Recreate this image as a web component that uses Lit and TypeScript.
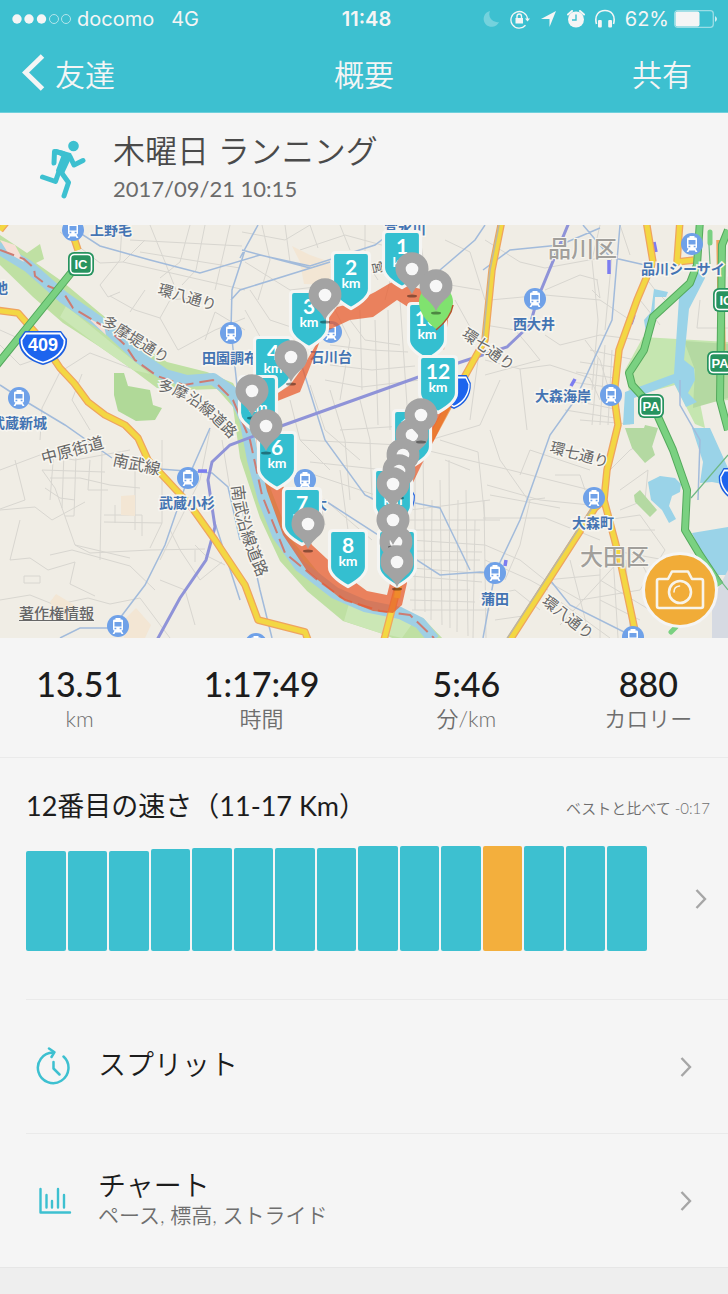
import { LitElement, html, svg, css } from "lit";
import { customElement } from "lit/decorators.js";
import { classMap } from "lit/directives/class-map.js";

const SHIELDS = [
  { n: "13", x: 407, y: 302 },
  { n: "1", x: 382, y: 230 },
  { n: "2", x: 331, y: 251 },
  { n: "3", x: 289, y: 290 },
  { n: "4", x: 253, y: 336 },
  { n: "5", x: 238, y: 375 },
  { n: "6", x: 257, y: 431 },
  { n: "7", x: 282, y: 487 },
  { n: "8", x: 328, y: 529 },
  { n: "9", x: 377, y: 529 },
  { n: "10", x: 373, y: 468 },
  { n: "11", x: 392, y: 409 },
  { n: "12", x: 418, y: 355 },
];

const PINS = [
  [412, 269], [325, 295], [291, 357], [252, 391], [266, 426],
  [412, 435], [403, 455], [399, 471], [393, 484], [421, 415],
  [308, 524], [396, 542], [393, 520], [397, 562],
];

const STATIONS = [
  [73, 230], [231, 333], [19, 398], [188, 478], [118, 626], [331, 332],
  [305, 480], [535, 299], [692, 244], [611, 395], [594, 498], [495, 573],
  [633, 637], [256, 644],
];

const PLACES = [
  { t: "上野毛", x: 90, y: 235, s: 14 },
  { t: "池", x: -6, y: 293, s: 14 },
  { t: "田園調布", x: 202, y: 363, s: 14 },
  { t: "武蔵新城", x: -9, y: 428, s: 14 },
  { t: "武蔵小杉", x: 159, y: 508, s: 14 },
  { t: "石川台", x: 310, y: 362, s: 14 },
  { t: "大", x: 313, y: 509, s: 14 },
  { t: "富水川", x: 384, y: 234, s: 14 },
  { t: "西大井", x: 513, y: 329, s: 14 },
  { t: "品川シーサイド", x: 641, y: 274, s: 14 },
  { t: "大森海岸", x: 535, y: 401, s: 14 },
  { t: "大森町", x: 572, y: 528, s: 14 },
  { t: "蒲田", x: 481, y: 604, s: 14 },
];

const ROADS = [
  { t: "環八通り", x: 157, y: 294, s: 15, r: 16 },
  { t: "多摩堤通り", x: 101, y: 324, s: 15, r: 32 },
  { t: "中原街道", x: 43, y: 464, s: 16, r: -15 },
  { t: "南武線", x: 112, y: 465, s: 16, r: 12 },
  { t: "環七通り", x: 461, y: 336, s: 15, r: 36 },
  { t: "環七通り", x: 549, y: 452, s: 15, r: 15 },
  { t: "環八通り", x: 541, y: 603, s: 15, r: 38 },
];

const STATS = [
  { value: "13.51", unit: "km" },
  { value: "1:17:49", unit: "時間" },
  { value: "5:46", unit: "分/km" },
  { value: "880", unit: "カロリー" },
];

const PACE = [95, 95, 95, 97, 98, 98, 98, 98, 100, 100, 100, 100, 100, 100, 100];
const BEST = 11;

const chevron = html`<svg class="chevron" viewBox="0 0 12 22" aria-hidden="true">
  <path d="M1.5 2 10 11 1.5 20" fill="none" stroke="#a6a6a6" stroke-width="2.4" />
</svg>`;

@customElement("route-map")
class RouteMap extends LitElement {
  static styles = css`
    :host { display: block; position: relative; }
    .canvas { display: block; width: 100%; aspect-ratio: 728 / 413; background: #f0ede5; }
    text { font-family: "Noto Sans CJK JP", sans-serif; }
    .place { fill: #4474b3; font-weight: 700; paint-order: stroke; stroke: #f7f5ef; stroke-width: 3px; }
    .road { fill: #666; font-weight: 400; paint-order: stroke; stroke: #f7f5ef; stroke-width: 3px; }
    .ward { fill: #a19f9b; font-weight: 500; font-size: 23px; paint-order: stroke; stroke: #f7f5ef; stroke-width: 2px; }
    .km { fill: #fff; font-family: Lato, sans-serif; font-weight: 700; text-anchor: middle; }
    .sign { fill: #fff; font-family: "Liberation Sans", sans-serif; font-weight: 700; text-anchor: middle; }
    .narrow { font-size: 13px; }
    .wide { font-size: 18px; }
    .legal {
      position: absolute; left: 19px; bottom: 15px; color: #666; text-decoration: underline;
      font: 500 15px/20px "Noto Sans CJK JP", sans-serif;
      text-shadow: 0 0 2px #fff;
    }
    .camera {
      position: absolute; right: 10px; bottom: 10px; width: 76px; height: 76px; padding: 0;
      display: grid; place-items: center; border: 3px solid #f5f5f5; border-radius: 50%;
      background: #f1ac38;
    }
    .camera svg { width: 50px; height: 42px; }
  `;

  private streets() {
    return svg`<g fill="none" stroke="#d8d6d0" stroke-width="1">
      <path d="M60 232 100 263 123 262 145 240M123 262 180 275 245 290M122 225 120 260 100 285 108 297 120 292M150 225 165 262 178 295M190 225 180 262 160 278M205 225 196 270 182 285M230 225 215 290M130 240 242 246M140 252 240 268M110 296 135 310 160 318 178 350M130 312 145 290M160 318 170 300 190 298M178 350 215 330 245 318M205 340 215 312 245 330"/>
      <path d="M0 330 40 348 60 372 90 353 130 368M60 372 42 408 40 440M82 374 72 400 90 430M0 345 20 365 40 358M0 470 40 455 75 460 130 450M42 470 55 488 75 545 130 558M75 545 90 553 150 550 205 549M15 460 25 500 0 509M42 470 105 472M50 478 80 478 110 485 140 488M45 488 60 498 75 500M54 450 50 500M64 452 62 508M76 455 74 516 65 516M90 460 88 490 108 490M102 450 100 560M135 455 135 530M104 515 142 515 142 536M104 522 162 523M115 505 115 523M162 440 162 523 150 548M0 510 35 507 52 520 85 502M20 520 10 560 30 558 48 570 75 562 70 584 95 596M50 555 72 550 130 566 155 590M0 600 30 595 55 605 88 598M24 576 40 576 40 583 24 583ZM170 530 180 550 200 580 222 562M160 580 185 590 195 625M210 430 200 480 160 560M195 550 195 562M222 440 235 520 245 540M88 598 110 604 140 598 170 638M225 565 205 555 195 545"/>
      <path d="M242 232 285 240 310 225M245 262 290 290 332 285M250 290 270 320 300 330M262 225 270 260 258 300M285 225 290 262M300 250 345 235 400 250M310 225 318 248M340 225 350 250M365 225 365 260 378 280M385 225 395 262 385 300M418 225 425 270M245 310 262 340M330 300 350 340 340 400M350 320 365 340 400 345M360 310 362 390M375 320 378 425M388 310 390 430M400 300 408 420M330 345 372 350 408 352M330 365 372 370 415 366M325 380 362 387 420 380M290 400 300 440 330 470M310 385 325 430 360 460M330 390 345 440 350 500M360 400 370 440 372 500M445 240 470 252 485 300M450 285 480 290M455 300 480 345 470 420M440 440 478 452 485 520M445 460 470 470M325 300 322 330M340 430 420 425M300 440 400 445M310 462 385 470M290 490 325 500 372 540M300 470 390 500M320 500 325 525M340 470 348 530"/>
      <path d="M415 455 415 610M423 450 425 612M432 500 431 620M440 480 442 625M449 460 450 628M458 500 457 632M466 490 468 636M475 520 473 638M484 500 486 638M410 510 490 500M410 520 500 520M412 530 480 530M410 540 485 545M412 551 482 552M410 560 480 560M412 568 500 575M410 576 482 582M410 590 470 590M410 600 475 602M412 610 490 610M425 450 510 470 590 490M430 440 480 425 500 380"/>
      <path d="M485 240 520 262 545 268 600 258M490 300 545 295 600 300 630 320M485 325 515 330 528 345 540 360 485 375M485 360 520 369 550 365 590 378 600 400M520 369 527 430M545 335 560 345 600 335 640 340M545 290 580 275 598 280M597 280 600 298 592 290M600 225 592 260 598 320 592 390M612 255 605 330M585 340 600 360 612 400M570 400 620 410M565 410 615 418M580 420 630 424M590 350 635 360M598 358 592 425M605 345 600 425M612 350 608 425M620 345 616 400M580 362 620 368M576 372 614 378M572 382 614 388M640 270 655 290 665 300M640 300 660 325M700 300 697 328 728 328M620 225 630 255M487 485 540 500 590 505M490 430 500 460 528 500 545 498M490 495 560 508M483 518 545 518 600 540M485 545 520 560 545 580 600 575M530 500 520 545 505 580M555 475 580 475 585 490M520 475 530 450 590 470M545 580 580 600 640 590M555 598 610 638M560 625 620 560M600 580 650 610M606 520 640 515 665 550 640 590M620 490 648 470 645 500 620 510M610 470 630 450 650 440M630 530 655 530M610 550 665 560M600 600 640 620"/>
      <path d="M600 568V638M612 540 618 638M626 560 630 630M570 560 590 638M640 560 660 600M485 560 530 580 548 590M490 595 515 590 540 610M495 620 530 615"/>
    </g>`;
  }

  private land() {
    return svg`
      <g fill="#f3e6d4">
        <path d="M292 246 310 255 330 262 334 285 304 284 300 262Z"/>
        <path d="M121 496 135 495 135 516 121 515ZM50 602 56 594 76 606 70 622 60 620ZM126 618 136 608 151 625 145 638 124 638Z"/>
      </g>
      <path fill="#bfe0a3" d="M0 235 27 253 40 244 44 259 36 263 63 282 100 313 133 340 167 362 207 372 233 383 245 407 250 428 262 465 273 495 290 538 323 578 357 605 393 611 423 618 444 640 397 640 380 633 343 621 307 591 280 561 260 518 240 458 233 407 217 389 187 390 157 388 133 370 100 347 63 323 33 297 0 265Z"/>
      <path fill="#cbe7b5" d="M66 306 150 374 133 370 100 347 60 317ZM350 600 395 614 412 624 402 638 380 633 344 621Z"/>
      <path fill="#b0d998" d="M114 373 124 373 128 386 150 390 153 405 162 408 155 420 136 421 118 411 114 395Z"/>
      <path fill="none" stroke="#9fcfe4" stroke-width="12" stroke-linejoin="round" d="M-5 246 28 266 63 297 110 330 140 358 165 375 187 381 213 379 233 393 245 418 253 460 264 500 278 535 300 566 335 593 365 606 400 613 420 623 434 640"/>
      <path fill="#f7dfd6" d="M0 240 15 245 24 262 8 253ZM88 318 104 326 106 335Z"/>
      <path fill="none" stroke="#cd7c73" stroke-width="2" stroke-dasharray="15 6" d="M0 250 24 259 34 268 35 276 48 286 63 292 73 308 108 329 125 345 135 360 157 376 184 385 213 380 233 400 250 440 262 495 285 553 315 578 345 600 380 611 410 615 434 638"/>
      <path fill="#c5e6b0" d="M643 337 728 342 728 400 700 403 705 428 695 424 675 385 630 397 625 370Z"/>
      <path fill="#b4d9a2" d="M684 341 728 344V398L693 408 695 370ZM625 428 646 428 655 455 645 463 632 448ZM645 425 658 428 652 447 640 440ZM634 495 640 490 657 510 650 517 635 502Z"/>
      <path fill="#9ad3e8" d="M700 270 705 278 689 309 684 360 694 368 695 380 688 393 697 402 686 407 674 383 634 398 634 424 623 425 625 392 674 374 679 298 697 274ZM654 289 668 292 666 297 655 297 654 322 646 333 644 320 651 312ZM692 428 710 428 728 468V485L712 482 700 483 703 462ZM648 482 660 476 675 478 681 484 680 492 672 496 669 506 676 519 669 523 662 510 651 500ZM692 533 728 527V575L718 575 700 550Z"/>
      <path fill="#d6dae2" d="M712 600 728 570V638H712Z"/>`;
  }

  private lines() {
    return svg`
      <g fill="none" stroke="#a2bbdb" stroke-width="1.500">
        <path d="M60 220 100 246 150 260 200 273 260 255 310 266 375 245 392 232M240 258 258 225M242 250 310 268M245 250 232 290 231 330 238 395M231 300 240 290 330 262M0 385 20 398 65 425 112 458M210 428 188 478 165 545 145 585 120 618M60 638 80 628 118 628M160 469 212 473 228 487 240 540M300 360 325 440 365 495 375 500M324 500 440 575 480 572 495 573M415 503 440 508 470 570M620 225 612 320 575 400 550 435 520 520 495 573 483 638M483 270 510 250 560 245 600 228M583 225 610 257 645 265M440 270 475 240 485 225M550 580 570 605 630 635M680 380 680 405 700 440 698 500M240 500 260 590 272 638M214 520 240 600"/>
      </g>
      <path fill="none" stroke="#8f93d8" stroke-width="3" d="M570 220 537 300 530 325 507 347 455 364 270 430 230 445 212 462 208 480 215 527 206 560 180 598 157 640"/>
      <g fill="none" stroke="#7c7df0" stroke-width="3.500"><path d="M198 471H207M609 260V274M634 315 631 324M575 379 571 386M611 450 609 456M506 560 505 566M654 242 656 252"/></g>
      <g fill="none" stroke-linejoin="round">
        <g stroke="#efa45f" stroke-width="7.500">
          <path d="M0 230 8 220M70 226 78 250M-5 310 18 313 40 338 60 368 74 383 88 402 105 415 125 425 138 438 148 460 165 478 190 505 215 540 245 585 258 620 305 632 308 640"/>
          <path d="M502 220 492 270 485 340 456 392 430 440M646 220 653 262 637 300 619 350 614 395 618 425 607 470 604 500 620 560 637 640M680 220 677 262 694 260M722 350 720 240M405 560 384 640M604 500 595 508 510 640"/>
        </g>
        <g stroke="#f3d743" stroke-width="5">
          <path d="M0 230 8 220M70 226 78 250M-5 310 18 313 40 338 60 368 74 383 88 402 105 415 125 425 138 438 148 460 165 478 190 505 215 540 245 585 258 620 305 632 308 640"/>
          <path d="M502 220 492 270 485 340 456 392 430 440M646 220 653 262 637 300 619 350 614 395 618 425 607 470 604 500 620 560 637 640M680 220 677 262 694 260M405 560 384 640M604 500 595 508 510 640"/>
        </g>
        <path stroke="#bcb7a2" stroke-width="1.600" d="M500 220 490 270 483 340M602 500 592 508 506 640"/>
      </g>
      <g fill="none" stroke-linejoin="round">
        <path stroke="#54a95c" stroke-width="8" d="M-4 366 75 268M700 220 697 265 690 283 653 317 644 350 629 373 632 385 655 410 673 450 687 490 685 530 700 555 720 585M728 230 722 245 720 400 728 430"/>
        <path stroke="#7ad181" stroke-width="6" d="M-4 366 75 268M700 220 697 265 690 283 653 317 644 350 629 373 632 385 655 410 673 450 687 490 685 530 700 555 720 585M728 230 722 245 720 400 728 430"/>
        <path stroke="#7ad181" stroke-width="5" stroke-linecap="round" d="M710 232V243M676 627 671 632"/>
        <path stroke="#6fb985" stroke-width="1.200" d="M691 498 728 455M709 245 710 264M716 575 728 590"/>
      </g>`;
  }

  private route() {
    return svg`<g fill="#e8592a" fill-opacity=".73">
      <path d="M392 282 375 292 353 303 337 307 325 323 317 343 303 367 290 385 278 393 262 396 256 420 257 450 267 491 283 535 307 571 340 598 373 611 393 613 402 605 407 583 405 540 407 495 420 468 440 428 453 403 452 380 442 360 432 390 412 440 390 490 385 530 390 583 387 595 367 591 340 571 312 545 283 486 276 455 275 402 300 392 310 367 323 333 335 327 350 320 373 317 397 300 408 307 425 312 444 350 448 320 425 290Z"/>
    </g>
    <path d="M402 566 397 598" stroke="#ef8a2b" stroke-width="6" fill="none"/>`;
  }

  private station([x, y]: number[]) {
    return svg`<g transform="translate(${x} ${y})">
      <circle r="11" fill="#6fa1e8"/>
      <path fill="#fff" d="M-2.500-8H2.500V-6.500H4Q5-6.500 5-5V3Q5 4.500 3.500 4.500L5.500 8H3.500L2.800 6.500H-2.800L-3.500 8H-5.500L-3.500 4.500Q-5 4.500-5 3V-5Q-5-6.500-4-6.500H-2.500Z"/>
      <path fill="#6fa1e8" d="M-3.500-4H3.500V.5H-3.500ZM-3.500 1.800H-1.700V3.300H-3.500ZM1.700 1.800H3.500V3.300H1.700Z"/>
    </g>`;
  }

  private shield(s: { n: string; x: number; y: number }) {
    return svg`<g transform="translate(${s.x} ${s.y})">
      <path d="M5 1.500H35Q38.500 1.500 38.500 5V38C38.500 45 30 52 20 57.500C10 52 1.500 45 1.500 38V5Q1.500 1.500 5 1.500Z" fill="#34bfd0" stroke="#f5f5f3" stroke-width="3.200"/>
      <text class="km" x="20" y="24" font-size="21">${s.n}</text>
      <text class="km" x="20" y="37" font-size="14">km</text>
    </g>`;
  }

  private pin([x, y]: number[]) {
    return svg`<g transform="translate(${x} ${y})">
      <ellipse cy="27" rx="5" ry="1.500" fill="#000" fill-opacity=".4"/>
      <path d="M0 25Q-2 20-9 13.500A16.500 16.500 0 1 1 9 13.500Q2 20 0 25Z" fill="#a3a3a3"/>
      <circle r="6.300" fill="#f7f7f7"/>
    </g>`;
  }

  private sign(t: string, x: number, y: number) {
    return svg`<g transform="translate(${x} ${y})">
      <rect x="-13" y="-12" width="26" height="24" rx="6" fill="#27935f"/>
      <rect x="-10.500" y="-9.500" width="21" height="19" rx="4" fill="#27935f" stroke="#fff" stroke-width="1.600"/>
      <text class="sign narrow" y="5">${t}</text>
    </g>`;
  }

  private badge(x: number, y: number, scale = 1) {
    return svg`<g transform="translate(${x} ${y}) scale(${scale} 1)">
      <path d="M-18-16H18L24-8C25 6 14 14 0 18C-14 14-25 6-24-8Z" fill="#1c5fe0"/>
      <path d="M-17-13.500H17L21.500-7C22 4 12 12 0 15.500C-12 12-22 4-21.500-7Z" fill="#1d64ee" stroke="#fff" stroke-width="1.800"/>
    </g>`;
  }

  render() {
    return html`
      <svg class="canvas" viewBox="0 225 728 413" preserveAspectRatio="xMidYMid slice" role="img" aria-label="ランニングコース">
        ${this.streets()} ${this.land()} ${this.lines()}
        ${this.badge(454, 391, 0.7)} ${this.badge(398, 503, 0.7)} ${this.badge(738, 484, 0.8)}
        ${this.badge(43, 347)}
        <text class="sign wide" x="43" y="351">409</text>
        ${this.sign("IC", 726, 300)} ${this.sign("IC", 81, 264)}
        ${this.sign("PA", 720, 363)} ${this.sign("PA", 651, 406)}
        ${STATIONS.map((s) => this.station(s))}
        ${PLACES.map((p) => svg`<text class="place" x=${p.x} y=${p.y} font-size=${p.s}>${p.t}</text>`)}
        ${ROADS.map((p) => svg`<text class="road" font-size=${p.s} transform="translate(${p.x} ${p.y}) rotate(${p.r})">${p.t}</text>`)}
        <path id="tama" fill="none" d="M157 390Q180 395 196 407T237 446" />
        <text class="road" font-size="15"><textPath href="#tama">多摩沿線道路</textPath></text>
        <path id="nambu" fill="none" d="M232 486Q235 530 264 590" />
        <text class="road" font-size="16"><textPath href="#nambu">南武沿線道路</textPath></text>
        <text class="ward" x="548" y="257">品川区</text>
        <text class="ward" x="580" y="565">大田区</text>
        <text class="road" font-size="13" transform="translate(372 262) rotate(78)">営</text>
        ${this.route()}
        ${SHIELDS.map((s) => this.shield(s))}
        <path d="M436 329Q419 316 419 302A17 17 0 0 1 453 302Q453 316 436 329Z" fill="#80e26f" />
        <path d="M453 305Q451 318 436 330" fill="none" stroke="#b5542b" stroke-width="1.500" />
        ${PINS.map((p) => this.pin(p))} ${this.pin([436, 286])}
      </svg>
      <a class="legal" href="#legal">著作権情報</a>
      <button class="camera" aria-label="写真を追加">
        <svg viewBox="0 0 50 42" fill="none" stroke="#f8f4ea" stroke-width="2.600" stroke-linejoin="round">
          <path d="M4 10H13L17 2.500H33L37 10H46Q48 10 48 12V37Q48 39 46 39H4Q2 39 2 37V12Q2 10 4 10Z" />
          <circle cx="25" cy="23" r="11" />
          <path d="M19 23Q19 17.500 24.500 17" stroke-width="1.600" stroke-linecap="round" />
        </svg>
      </button>`;
  }
}

@customElement("app-root")
class AppRoot extends LitElement {
  static styles = css`
    :host {
      display: flex; flex-direction: column; min-height: 100vh; background: #eee; color: #1c1c1c;
      font-family: Lato, "Noto Sans CJK JP", sans-serif;
    }
    * { box-sizing: border-box; }
    button, a { color: inherit; font: inherit; text-decoration: none; background: none; border: 0; padding: 0; text-align: left; }
    h1, h2, p { margin: 0; font-weight: 400; }
    .top { background: #3dc0d0; color: #f5f5f5; border-bottom: 1px solid #6fd0dc; }
    .status {
      display: grid; grid-template-columns: 1fr auto 1fr; align-items: center; height: 37px;
      padding: 0 11px 0 12px; font: 400 20px/24px Inter, sans-serif;
    }
    .time { font-weight: 600; padding-left: 4px; }
    .carrier, .tray { display: flex; align-items: center; }
    .carrier { gap: 5px; }
    .net { margin-left: 12px; }
    .dots { width: 60px; height: 12px; }
    .tray { justify-content: flex-end; gap: 10px; }
    .tray svg { height: 20px; }
    .tray .battery { width: 43px; height: 20px; margin-left: -5px; }
    .nav {
      display: grid; grid-template-columns: 1fr auto 1fr; align-items: center; height: 75px;
      padding: 0 36px 4px 22px; font: 350 30px/44px "Noto Sans CJK JP", sans-serif;
    }
    .nav h1 { font: inherit; padding-left: 14px; }
    .back { display: flex; align-items: center; gap: 10px; justify-self: start; }
    .back svg { width: 23px; height: 37px; }
    .share { justify-self: end; }
    main { background: #f5f5f5; border-bottom: 1px solid #e6e6e6; }
    .activity { display: flex; align-items: center; gap: 27px; padding: 0 39px; height: 112px; }
    .runner { width: 47px; height: 60px; }
    .name { font-size: 32px; line-height: 44px; color: #4a4a4a; font-weight: 350; }
    .date { font-size: 22px; line-height: 32px; color: #6b6b6b; padding-bottom: 4px; }
    .stats { display: grid; grid-template-columns: 7fr 9fr 9fr 7fr; margin: 0; padding: 24px 0 25px; border-bottom: 1px solid #eaeaea; text-align: center; }
    .stats div { display: flex; flex-direction: column-reverse; }
    .stats dd { margin: 0; font-size: 34px; line-height: 44px; font-weight: 500; }
    .stats dt { font-size: 22px; line-height: 26px; color: #6e6e6e; font-weight: 350; }
    .pace { padding: 24px 18px 48px 26px; }
    .heading { display: flex; align-items: center; justify-content: space-between; line-height: 44px; }
    .heading h2 { font-size: 27px; }
    .heading p { font-size: 15px; color: #6e6e6e; font-weight: 350; padding-top: 4px; }
    .chart { display: flex; align-items: center; justify-content: space-between; width: 100%; padding: 16px 2px 0 0; gap: 47px; }
    .bars { flex: 1; display: flex; align-items: flex-end; gap: 2px; height: 105px; }
    .bar { flex: 1; background: #3dc0d0; border-radius: 2px; }
    .best { background: #f3af3d; }
    .chevron { width: 14px; height: 22px; flex: none; }
    .row { display: flex; align-items: center; height: 134px; margin-left: 26px; padding: 0 35px 0 10px; border-top: 1px solid #eaeaea; }
    .icon { width: 36px; height: 40px; flex: none; }
    .label { flex: 1; padding: 0 0 6px 26px; font-size: 28px; line-height: 34px; font-weight: 350; }
    .label small { display: block; font-size: 21px; line-height: 26px; color: #6e6e6e; }
  `;

  private status() {
    return html`<div class="status">
      <div class="carrier">
        <svg class="dots" viewBox="0 0 60 12" aria-hidden="true">
          <g fill="#f5f5f5"><circle cx="5" cy="6" r="4.700" /><circle cx="17" cy="6" r="4.700" /><circle cx="29.500" cy="6" r="4.700" /></g>
          <g fill="none" stroke="#b4e5eb"><circle cx="42" cy="6" r="4.500" /><circle cx="54" cy="6" r="4.500" /></g>
        </svg>
        <span>docomo</span><span class="net">4G</span>
      </div>
      <span class="time">11:48</span>
      <div class="tray">
        <svg viewBox="0 0 17 20" aria-hidden="true"><path d="M7 2A8 8 0 1 0 16 13 8 8 0 0 1 7 2Z" fill="#74d2dd" /></svg>
        <svg viewBox="0 0 20 20" aria-hidden="true">
          <path d="M15.500 16.300A8.300 8.300 0 1 1 17.500 10" fill="none" stroke="#f5f5f5" stroke-width="1.300" />
          <path d="M15 9.500H20L17.500 12.500ZM5.500 9H13V14.500H5.500Z" fill="#f5f5f5" />
          <path d="M7 9V7.200A2.200 2.200 0 0 1 11.500 7.200V9" fill="none" stroke="#f5f5f5" stroke-width="1.400" />
        </svg>
        <svg viewBox="0 0 17 20" aria-hidden="true"><path d="M16 2 9.500 18V10H1Z" fill="#f5f5f5" /></svg>
        <svg viewBox="0 0 18 20" aria-hidden="true">
          <circle cx="9" cy="10.500" r="8" fill="#f5f5f5" />
          <path d="M1 5.500 5 2M17 5.500 13 2" stroke="#f5f5f5" stroke-width="2" stroke-linecap="round" />
          <path d="M9 5.500V11H5" fill="none" stroke="#3dc0d0" stroke-width="1.400" />
        </svg>
        <svg viewBox="0 0 20 20" aria-hidden="true">
          <path d="M1.500 15C-1 6 4 1.500 10 1.500S21 6 18.500 15" fill="none" stroke="#f5f5f5" stroke-width="1.600" />
          <rect x="3" y="11" width="3.800" height="7.500" rx="1" fill="#f5f5f5" /><rect x="13.200" y="11" width="3.800" height="7.500" rx="1" fill="#f5f5f5" />
        </svg>
        <span>62%</span>
        <svg class="battery" viewBox="0 0 43 20" aria-hidden="true">
          <rect x=".7" y="1.700" width="38.600" height="16.600" rx="3" fill="none" stroke="#9bdde5" stroke-width="1.300" />
          <rect x="1.500" y="2.500" width="24" height="15" rx="2" fill="#f5f5f5" /><path d="M41 7Q45 10 41 13Z" fill="#d0eff3" />
        </svg>
      </div>
    </div>`;
  }

  render() {
    return html`
      <header class="top">
        ${this.status()}
        <nav class="nav">
          <button class="back">
            <svg viewBox="0 0 23 37" aria-hidden="true"><path d="M20.500 2 3.500 18.500 20.500 35" fill="none" stroke="#f5f5f5" stroke-width="5" /></svg>
            友達
          </button>
          <h1>概要</h1>
          <button class="share">共有</button>
        </nav>
      </header>
      <main>
        <section class="activity">
          <svg class="runner" viewBox="0 0 47 60" aria-hidden="true">
            <circle cx="34.500" cy="7" r="5.300" fill="#3dc0d0" />
            <path d="M17 11.500 31 15.500 30.500 19 24 33 18.500 31.500 24 17Z" fill="#3dc0d0" stroke="#3dc0d0" stroke-width="3" stroke-linejoin="round" />
            <g fill="none" stroke="#3dc0d0" stroke-width="5" stroke-linecap="round" stroke-linejoin="round">
              <path d="M15 24 15.500 12.500 24 14.500" /><path d="M31 17.500 35 26 44 21.500" />
              <path d="M20.500 31 16.500 42.500 3.500 38" /><path d="M22 33 29.500 43.500 25 57" />
            </g>
          </svg>
          <div>
            <h2 class="name">木曜日 ランニング</h2>
            <p class="date">2017/09/21 10:15</p>
          </div>
        </section>
        <route-map></route-map>
        <dl class="stats">
          ${STATS.map((s) => html`<div><dt>${s.unit}</dt><dd>${s.value}</dd></div>`)}
        </dl>
        <section class="pace">
          <div class="heading"><h2>12番目の速さ（11-17 Km）</h2><p>ベストと比べて -0:17</p></div>
          <button class="chart" aria-label="ペースの詳細">
            <span class="bars">
              ${PACE.map((h, i) => html`<span class=${classMap({ bar: true, best: i === BEST })} style="height:${h}%"></span>`)}
            </span>
            ${chevron}
          </button>
        </section>
        <a class="row" href="#splits">
          <svg class="icon" viewBox="0 0 36 40" fill="none" stroke="#3dc0d0" stroke-width="2.500" stroke-linecap="round" stroke-linejoin="round" aria-hidden="true">
            <path d="M27.500 9.500A15.300 15.300 0 1 1 17 5.500" /><path d="M13 1.500 18.500 5.200 15.500 10M17.500 15V21.500L23.500 27.500" />
          </svg>
          <span class="label">スプリット</span>${chevron}
        </a>
        <a class="row" href="#charts">
          <svg class="icon" viewBox="0 0 36 40" fill="none" stroke="#3dc0d0" stroke-width="2.400" stroke-linecap="round" stroke-linejoin="round" aria-hidden="true">
            <path d="M4.500 8V31.500H34M10.500 14V26.500M16 20V26.500M22 8V26.500M28 14V26.500" />
          </svg>
          <span class="label">チャート<small>ペース, 標高, ストライド</small></span>${chevron}
        </a>
      </main>`;
  }
}
